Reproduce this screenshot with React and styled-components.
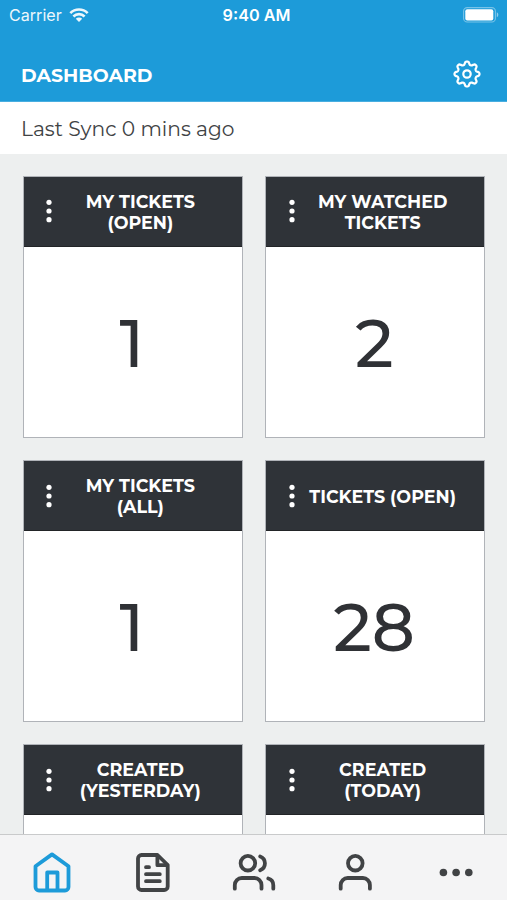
import React from "react";
import styled, { createGlobalStyle } from "styled-components";

const cards = [
    { id: "my-open", lines: ["MY TICKETS", "(OPEN)"], count: "1" },
    { id: "watched", lines: ["MY WATCHED", "TICKETS"], count: "2" },
    { id: "my-all", lines: ["MY TICKETS", "(ALL)"], count: "1" },
    { id: "open", lines: ["TICKETS (OPEN)"], count: "28" },
    { id: "yesterday", lines: ["CREATED", "(YESTERDAY)"], count: "" },
    { id: "today", lines: ["CREATED", "(TODAY)"], count: "" },
];

//eight rounded teeth around the centre of a 28px box
const gearPoints = Array.from({ length: 96 }, (_, i)=>{
    const angle = (i / 96) * Math.PI * 2;
    const wave = Math.cos(angle * 8);
    const radius = 11 + 1.5 * Math.tanh(1.6 * wave) / Math.tanh(1.6);
    return `${(14 + radius * Math.cos(angle)).toFixed(2)},${(14 + radius * Math.sin(angle)).toFixed(2)}`;
}).join(" ");

function WifiIcon(){
    return(
        <svg width="20" height="14" viewBox="0 0 20 14" fill="none" stroke="#fff" strokeWidth="2.6">
            <path d="M1.3 5.1a12.3 12.3 0 0 1 17.4 0" />
            <path d="M4.4 8.5a7.9 7.9 0 0 1 11.2 0" />
            <path d="M10 14 6.8 10.8a4.6 4.6 0 0 1 6.4 0z" fill="#fff" stroke="none" />
        </svg>
    )
}

function BatteryIcon(){
    return(
        <svg width="36" height="16" viewBox="0 0 36 16">
            <rect x="0.6" y="0.6" width="31.8" height="14.4" rx="3.6" fill="none" stroke="#fff" strokeOpacity="0.4" strokeWidth="1.1" />
            <rect x="2.3" y="2.2" width="28" height="11.2" rx="2" fill="#fff" />
            <path d="M33.8 5.3c2 .8 2 4.2 0 5z" fill="#fff" fillOpacity="0.5" />
        </svg>
    )
}

function GearIcon(){
    return(
        <svg width="28" height="28" viewBox="0 0 28 28" fill="none" stroke="#fff" strokeWidth="2.2" strokeLinejoin="round">
            <circle cx="14" cy="14" r="3.7" />
            <polygon points={gearPoints} />
        </svg>
    )
}

function DotsIcon(){
    return(
        <svg width="6" height="24" viewBox="0 0 6 24" fill="#fff">
            <circle cx="3" cy="3.3" r="2.6" />
            <circle cx="3" cy="12" r="2.6" />
            <circle cx="3" cy="20.7" r="2.6" />
        </svg>
    )
}

export default function App(){
    return(
        <Screen>
            <GlobalStyle />
            <StatusBar>
                <Carrier><span>Carrier</span><WifiIcon /></Carrier>
                <Clock>9:40 AM</Clock>
                <Battery><BatteryIcon /></Battery>
            </StatusBar>
            <Header>
                <Title>DASHBOARD</Title>
                <GearIcon />
            </Header>
            <SyncBar><span>Last Sync 0 mins ago</span></SyncBar>
            <Board>
                {
                    cards.map((card)=>{
                        return(
                            <Card key={card.id}>
                                <CardHeader>
                                    <DotsIcon />
                                    <CardTitle>
                                        {card.lines.map((line)=>(
                                            <span key={line}>{line}</span>
                                        ))}
                                    </CardTitle>
                                </CardHeader>
                                <Count>{card.count}</Count>
                            </Card>
                        )
                    })
                }
            </Board>
            <TabBar>
                <Tab $active>
                    <svg width="44" height="46" viewBox="0 0 44 46">
                        <path d="M23 5.4 39.5 17.2V38a3.5 3.5 0 0 1-3.5 3.5H10a3.5 3.5 0 0 1-3.5-3.5V17.2Z" />
                        <path d="M18.2 41V23.5H28.5V41" />
                    </svg>
                </Tab>
                <Tab>
                    <svg width="44" height="46" viewBox="0 0 44 46">
                        <path d="M11.5 6H27.5L37.7 16V37.5a3.5 3.5 0 0 1-3.5 3.5H11.5a3.5 3.5 0 0 1-3.5-3.5V9.5A3.5 3.5 0 0 1 11.5 6Z" />
                        <path d="M27.4 7V16.2H37M16 18.2h3M16 25.2H29.8M16 32.2H29.8" />
                    </svg>
                </Tab>
                <Tab>
                    <svg width="44" height="46" viewBox="0 0 44 46">
                        <circle cx="16.9" cy="14.2" r="7.3" />
                        <path d="M3.8 39.7V36a7 7 0 0 1 7-7H23.5a7 7 0 0 1 7 7V39.7M29.2 7.4a7.4 7.4 0 0 1 0 13.8M37.3 29.5a7 7 0 0 1 5 6.8V39.7" />
                    </svg>
                </Tab>
                <Tab>
                    <svg width="44" height="46" viewBox="0 0 44 46">
                        <circle cx="22.3" cy="14.2" r="7.3" />
                        <path d="M7.7 39.7V36a7 7 0 0 1 7-7H29.9a7 7 0 0 1 7 7V39.7" />
                    </svg>
                </Tab>
                <Tab $solid>
                    <svg width="44" height="46" viewBox="0 0 44 46">
                        <circle cx="9.4" cy="23.5" r="3.8" />
                        <circle cx="22.1" cy="23.5" r="3.8" />
                        <circle cx="34.8" cy="23.5" r="3.8" />
                    </svg>
                </Tab>
            </TabBar>
        </Screen>
    )
}

const GlobalStyle = createGlobalStyle`
*{
    box-sizing:border-box;
}
body{
    margin:0;
    font-family:Montserrat,Inter,sans-serif;
}
svg{
    display:block;
    flex:none;
    overflow:visible;
}
`

const Screen = styled.div`
width:507px;
height:900px;
display:flex;
flex-direction:column;
overflow:hidden;
background-color:#edefef;
`

const StatusBar = styled.div`
flex:none;
height:30px;
padding:0 8px 0 9px;
display:grid;
grid-template-columns:1fr auto 1fr;
align-items:center;
background-color:#1d9bd9;
color:white;
font-family:Inter,sans-serif;
font-size:16.1px;
line-height:30px;
`

const Carrier = styled.div`
display:flex;
align-items:center;
gap:7px;
opacity:0.92;
`

const Clock = styled.div`
padding-left:5px;
font-weight:600;
font-size:16.2px;
`

const Battery = styled.div`
justify-self:end;
`

const Header = styled.div`
flex:none;
height:72px;
padding:17px 26.5px 0 21px;
display:flex;
justify-content:space-between;
align-items:center;
background-color:#1d9bd9;
border-bottom:1px solid #48aee0;
`

const Title = styled.h1`
margin:0;
padding-top:2px;
color:white;
font-size:18.9px;
font-weight:700;
`

const SyncBar = styled.div`
flex:none;
height:52px;
padding-left:21px;
display:flex;
align-items:center;
background-color:white;
color:#414345;
font-size:20.2px;
`

const Board = styled.div`
flex:1;
min-height:0;
overflow:hidden;
padding:21.7px 21.7px 0 22.7px;
display:grid;
grid-template-columns:1fr 1fr;
grid-auto-rows:262px;
align-content:start;
column-gap:22px;
row-gap:22.4px;
`

const Card = styled.div`
display:flex;
flex-direction:column;
background-color:white;
border:1px solid #b0b3b8;
`

const CardHeader = styled.div`
flex:none;
height:70px;
padding-left:22.5px;
display:flex;
align-items:center;
background-color:#2f3338;
border-bottom:1px solid #222427;
`

const CardTitle = styled.div`
flex:1;
padding:1px 13.5px 0 0;
display:flex;
flex-direction:column;
align-items:center;
color:white;
font-size:17.5px;
font-weight:700;
line-height:21px;
white-space:nowrap;
`

const Count = styled.div`
flex:1;
padding:2px 2px 0 0;
display:flex;
align-items:center;
justify-content:center;
color:#2f3135;
font-size:67px;
font-weight:500;
`

const TabBar = styled.div`
flex:none;
height:66px;
padding-top:14px;
display:grid;
grid-template-columns:repeat(5,1fr);
background-color:#f4f4f5;
border-top:1px solid #c9cacb;
`

const Tab = styled.div`
display:flex;
justify-content:center;
svg{
    fill:${(props)=>props.$solid?"#414345":"none"};
    stroke:${(props)=>props.$solid?"none":props.$active?"#1d9bd9":"#414345"};
    stroke-width:3.8;
    stroke-linecap:round;
    stroke-linejoin:round;
}
`
